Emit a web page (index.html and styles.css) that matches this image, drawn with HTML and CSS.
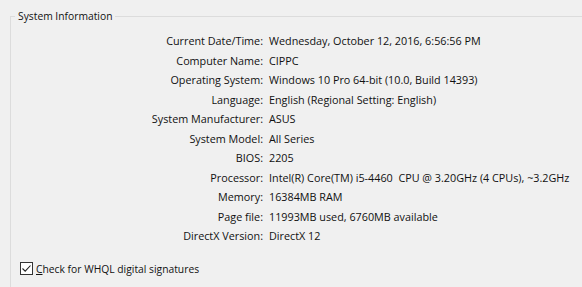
FILE: index.html
```html
<!DOCTYPE html>
<html lang="en">
<head>
    <meta charset="UTF-8">
    <title>System Information</title>
    <link rel="stylesheet" href="styles.css">
</head>
<body>
    <fieldset class="group">
        <legend>System Information</legend>
        <div class="info">
            <div class="key">Current Date/Time:</div><div class="val">Wednesday, October 12, 2016, 6:56:56 PM</div>
            <div class="key">Computer Name:</div><div class="val">CIPPC</div>
            <div class="key">Operating System:</div><div class="val">Windows 10 Pro 64-bit (10.0, Build 14393)</div>
            <div class="key">Language:</div><div class="val">English (Regional Setting: English)</div>
            <div class="key">System Manufacturer:</div><div class="val">ASUS</div>
            <div class="key">System Model:</div><div class="val">All Series</div>
            <div class="key">BIOS:</div><div class="val">2205</div>
            <div class="key">Processor:</div><div class="val">Intel(R) Core(TM) i5-4460&nbsp; CPU @ 3.20GHz (4 CPUs), ~3.2GHz</div>
            <div class="key">Memory:</div><div class="val">16384MB RAM</div>
            <div class="key">Page file:</div><div class="val">11993MB used, 6760MB available</div>
            <div class="key">DirectX Version:</div><div class="val">DirectX 12</div>
        </div>
        <label class="check">
            <span class="box">
                <svg width="13" height="13" viewBox="0 0 13 13">
                    <rect x="0.5" y="0.5" width="12" height="12" fill="#fff" stroke="#333"/>
                    <path d="M2.5 6.5 L5.2 9.2 L10.5 3.5" fill="none" stroke="#222" stroke-width="1.1"/>
                </svg>
            </span>
            <span><u>C</u>heck for WHQL digital signatures</span>
        </label>
    </fieldset>
</body>
</html>
```

FILE: styles.css
```css
html, body {
    margin: 0;
    padding: 0;
    background: #f0f0f0;
}
body {
    font-family: "Open Sans", "DejaVu Sans", sans-serif;
    font-size: 10.8px;
    color: #111;
    width: 582px;
    height: 287px;
    overflow: hidden;
}
.group {
    box-sizing: border-box;
    height: 278px;
    margin: 9px 0 0 10px;
    padding: 0;
    border: 1px solid #dcdcdc;
    border-right: none;
    border-bottom: none;
}
.group legend {
    padding: 0 3px;
    margin-left: 4px;
    line-height: 14px;
    font-size: 10.3px;
}
.info {
    display: grid;
    grid-template-columns: 252px auto;
    column-gap: 6px;
    margin-top: 8px;
}
.key {
    text-align: right;
    line-height: 19.5px;
    white-space: nowrap;
}
.val {
    line-height: 19.5px;
    white-space: nowrap;
}
.check {
    display: flex;
    align-items: center;
    gap: 3px;
    margin: 16px 0 0 9px;
    font-size: 10.3px;
}
.box {
    display: flex;
}
```
